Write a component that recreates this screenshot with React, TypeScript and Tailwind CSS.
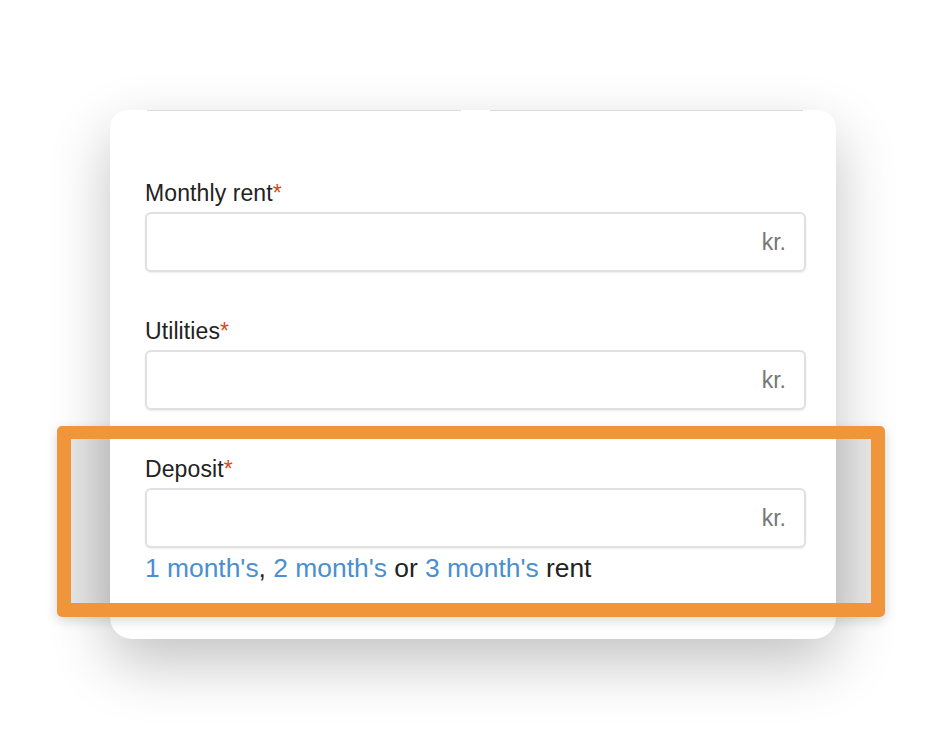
import React from "react";

function Field({ label }: { label: string }) {
  return (
    <div className="flex flex-col">
      <div className="text-[23px] leading-[28px] text-[#222222] tracking-[0.1px]">
        {label}
        <span className="text-[#e0461e]">*</span>
      </div>
      <div className="mt-[5px] h-[60px] rounded-[6px] border-2 border-[#e0e0e0] bg-white shadow-[0_1px_2px_rgba(0,0,0,0.08)] flex items-center justify-end pr-[18px]">
        <span className="text-[23px] text-[#777777]">kr.</span>
      </div>
    </div>
  );
}

export default function App() {
  return (
    <div
      className="relative w-[946px] h-[750px] overflow-hidden bg-white"
      style={{ fontFamily: '"Liberation Sans", Arial, sans-serif' }}
    >
      {/* gray zone inside highlight (behind card) */}
      <div className="absolute left-[71px] top-[439px] w-[800px] h-[164px] bg-[linear-gradient(90deg,#e8e8e8_0%,#dcdcdc_5%,#e2e2e2_50%,#e2e2e2_95%,#eaeaea_100%)]" />
      <div className="relative z-10 pt-[110px] pl-[110px]">
        <div className="w-[726px] h-[529px] bg-white rounded-b-[22px] rounded-t-[18px] shadow-[0_24px_60px_rgba(0,0,0,0.24)] pl-[35px] pr-[30px] flex flex-col">
          <div className="flex h-px">
            <div className="ml-[2px] w-[314px] bg-[#dcdcdc]" />
            <div className="ml-[29px] w-[313px] bg-[#dcdcdc]" />
          </div>
          <div className="pt-[68px] flex flex-col gap-[45px]">
            <Field label="Monthly rent" />
            <Field label="Utilities" />
            <Field label="Deposit" />
          </div>
          <div className="mt-[5px] text-[26.4px] leading-[30px] text-[#222222]">
            <span className="text-[#4a8fcf]">1 month's</span>,{" "}
            <span className="text-[#4a8fcf]">2 month's</span> or{" "}
            <span className="text-[#4a8fcf]">3 month's</span> rent
          </div>
        </div>
      </div>
      {/* orange highlight */}
      <div className="absolute z-20 left-[57px] top-[426px] w-[828px] h-[191px] border-[14px] border-t-[13px] border-[#f0953a] rounded-[5px] shadow-[0_4px_12px_rgba(0,0,0,0.15)]" />
    </div>
  );
}
